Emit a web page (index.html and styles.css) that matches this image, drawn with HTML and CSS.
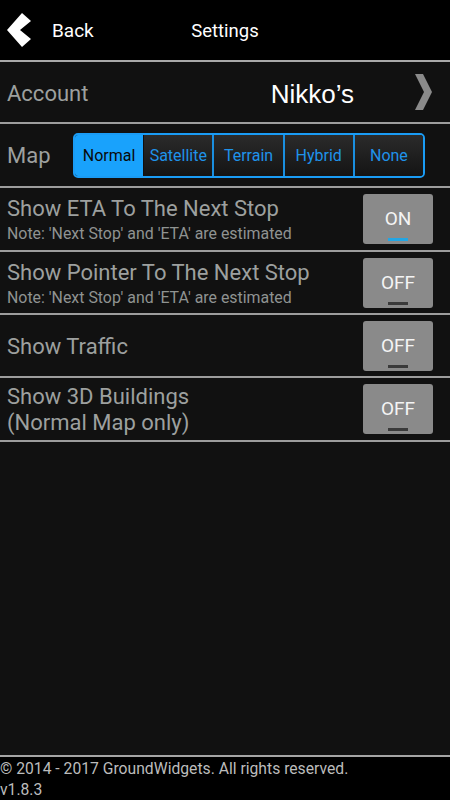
FILE: index.html
```html
<!DOCTYPE html>
<html>
<head>
<meta charset="utf-8">
<link rel="stylesheet" href="styles.css">
</head>
<body>
<div class="app">
  <header class="topbar">
    <div class="back">
      <svg class="back-icon" width="26" height="36" viewBox="0 0 26 36"><polygon points="1,18 16,1 25,9 14,18 25,27 16,35" fill="#fff"/></svg>
      <span class="back-label">Back</span>
    </div>
    <div class="title">Settings</div>
    <div></div>
  </header>
  <main class="list">
    <div class="row row-account">
      <span class="label single">Account</span>
      <span class="account-name">Nikko’s</span>
      <svg class="chev" width="18" height="36" viewBox="0 0 18 36"><polygon points="0,0 8,0 17,18 8,36 0,36 9,18" fill="#8a8a8a"/></svg>
    </div>
    <div class="row row-map">
      <span class="label map-label">Map</span>
      <div class="segmented">
        <span class="seg seg-active">Normal</span>
        <span class="seg">Satellite</span>
        <span class="seg">Terrain</span>
        <span class="seg">Hybrid</span>
        <span class="seg">None</span>
      </div>
    </div>
    <div class="row row-opt">
      <div class="text">
        <div class="label title-line">Show ETA To The Next Stop</div>
        <div class="note">Note: 'Next Stop' and 'ETA' are estimated</div>
      </div>
      <div class="toggle on"><span class="toggle-text">ON</span><span class="bar"></span></div>
    </div>
    <div class="row row-opt row-61">
      <div class="text">
        <div class="label title-line">Show Pointer To The Next Stop</div>
        <div class="note">Note: 'Next Stop' and 'ETA' are estimated</div>
      </div>
      <div class="toggle"><span class="toggle-text">OFF</span><span class="bar"></span></div>
    </div>
    <div class="row row-opt row-61">
      <div class="text">
        <div class="label single">Show Traffic</div>
      </div>
      <div class="toggle"><span class="toggle-text">OFF</span><span class="bar"></span></div>
    </div>
    <div class="row row-opt">
      <div class="text">
        <div class="label two-line">Show 3D Buildings<br>(Normal Map only)</div>
      </div>
      <div class="toggle"><span class="toggle-text">OFF</span><span class="bar"></span></div>
    </div>
  </main>
  <footer class="footer">
    <div>© 2014 - 2017 GroundWidgets. All rights reserved.</div>
    <div>v1.8.3</div>
  </footer>
</div>
</body>
</html>
```
FILE: styles.css
```css
html, body {
  margin: 0;
  padding: 0;
}
body {
  background: #111;
  font-family: Roboto, "Noto Sans", sans-serif;
}
.app {
  height: 800px;
  display: flex;
  flex-direction: column;
}
.topbar {
  height: 60px;
  flex: none;
  background: #000;
  border-bottom: 2px solid #a9a9a9;
  display: grid;
  grid-template-columns: 1fr auto 1fr;
  align-items: center;
}
.back {
  display: flex;
  align-items: center;
  padding-left: 6px;
}
.back-icon {
  display: block;
}
.back-label {
  color: #fff;
  font-size: 19px;
  margin-left: 20px;
  line-height: 22px;
  padding-top: 1px;
}
.title {
  color: #fff;
  font-size: 18.5px;
  line-height: 22px;
  padding-top: 1px;
}
.list {
  flex: 1;
  background: #111;
}
.row {
  display: flex;
  align-items: center;
  padding-left: 7px;
  padding-right: 17px;
  border-bottom: 2px solid #9d9d9d;
  height: 62px;
}
.row-account {
  height: 60px;
}
.row-61 {
  height: 61px;
}
.label {
  color: #9da09f;
  font-size: 22px;
  line-height: 26px;
}
.single {
  padding-top: 3px;
}
.account-name {
  margin-left: auto;
  margin-right: 61px;
  color: #fff;
  font-family: "Liberation Sans", Arial, sans-serif;
  font-size: 26px;
  line-height: 30px;
  padding-top: 3px;
}
.chev {
  display: block;
  margin-top: -1px;
}
.map-label {
  width: 66px;
  padding-top: 1px;
}
.segmented {
  display: flex;
  width: 352px;
  height: 45px;
  box-sizing: border-box;
  border: 2px solid #1a9cf5;
  border-radius: 5px;
  overflow: hidden;
  margin-top: 1px;
}
.seg {
  flex: 1;
  display: flex;
  align-items: center;
  justify-content: center;
  color: #1f93ea;
  font-size: 16px;
  background: linear-gradient(#2b2b2b, #141414);
  border-left: 2px solid #1a8fe0;
}
.seg:nth-child(2) {
  border-left: 1px solid #101010;
}
.seg-active {
  border-left: none;
  background: #19a2fc;
  color: #0a0a0a;
}
.row-opt {
  justify-content: space-between;
}
.title-line {
  line-height: 30px;
}
.note {
  color: #8f9391;
  font-size: 15.9px;
  line-height: 20px;
}
.two-line {
  line-height: 26px;
  padding-top: 2px;
}
.toggle {
  width: 70px;
  height: 50px;
  box-sizing: border-box;
  background: #8a8a8a;
  border-radius: 3px;
  display: flex;
  flex-direction: column;
  align-items: center;
  padding-top: 14px;
  flex: none;
}
.toggle-text {
  color: #f4f4f4;
  font-size: 19px;
  line-height: 22px;
}
.bar {
  display: block;
  width: 20px;
  height: 3px;
  margin-top: 8px;
  background: #3a3a3a;
}
.toggle.on .bar {
  background: #23a6e4;
}
.footer {
  flex: none;
  background: #000;
  border-top: 2px solid #a5a5a5;
  color: #bcbcbc;
  font-size: 15.7px;
  line-height: 21px;
  padding-top: 1px;
  height: 45px;
  box-sizing: border-box;
  padding-bottom: 0;
}
```
